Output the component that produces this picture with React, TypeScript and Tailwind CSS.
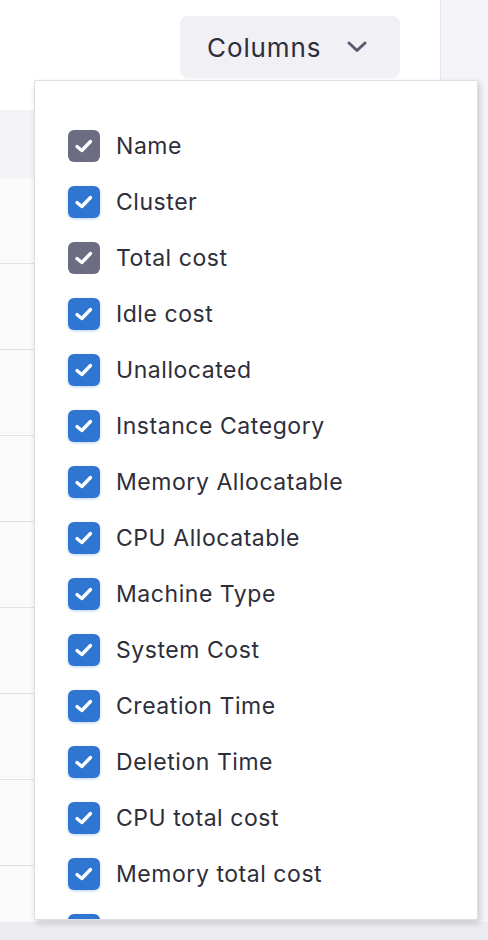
import React from 'react';

const columns: { label: string; locked?: boolean }[] = [
  { label: 'Name', locked: true },
  { label: 'Cluster' },
  { label: 'Total cost', locked: true },
  { label: 'Idle cost' },
  { label: 'Unallocated' },
  { label: 'Instance Category' },
  { label: 'Memory Allocatable' },
  { label: 'CPU Allocatable' },
  { label: 'Machine Type' },
  { label: 'System Cost' },
  { label: 'Creation Time' },
  { label: 'Deletion Time' },
  { label: 'CPU total cost' },
  { label: 'Memory total cost' },
  { label: '' },
];

const Check: React.FC<{ locked?: boolean }> = ({ locked }) => (
  <span
    className={`flex h-8 w-8 shrink-0 items-center justify-center rounded-[6px] ${
      locked ? 'bg-[#6c6c82]' : 'bg-[#2f76d3] shadow-[0_1px_3px_rgba(47,118,211,0.35)]'
    }`}
  >
    <svg width="20" height="16" viewBox="0 0 20 16" fill="none">
      <path d="M3 8.5 L7.8 12.5 L16.5 3.5" stroke="white" strokeWidth="3.4" strokeLinecap="round" strokeLinejoin="round" />
    </svg>
  </span>
);

const App: React.FC = () => {
  return (
    <div className="relative flex h-[940px] w-[488px] overflow-hidden bg-white font-['Inter',sans-serif] text-[#2e2e3b]">
      {/* Table area */}
      <div className="flex w-[440px] shrink-0 flex-col">
        <div className="flex h-[110px] shrink-0 items-start justify-end pr-[40px] pt-[16px]">
          <button className="flex h-[62px] w-[220px] items-center rounded-[8px] bg-[#f0f0f5] pl-[27px] text-[26px] tracking-[0.9px] text-[#2e2e3b]">
            Columns
            <svg className="ml-[25px]" width="22" height="12" viewBox="0 0 22 12" fill="none">
              <path d="M3 2 L11 9.5 L19 2" stroke="#5b5b70" strokeWidth="3" strokeLinecap="round" strokeLinejoin="round" />
            </svg>
          </button>
        </div>
        <div className="h-[68px] shrink-0 bg-[#f3f3f6]" />
        {Array.from({ length: 9 }).map((_, i) => (
          <div key={i} className="h-[86px] shrink-0 border-b border-[#e1e1e7] bg-[#fafafb]" />
        ))}
      </div>
      {/* Side panel */}
      <div className="flex-1 border-l border-[#e8e8ee] bg-[#f5f5f9]" />

      {/* Scrollbar track */}
      <div className="absolute bottom-0 left-0 h-[18px] w-full bg-[#ececf0]" />

      {/* Columns dropdown */}
      <div className="absolute left-[34px] top-[80px] h-[840px] w-[444px] overflow-hidden rounded-[2px] border border-[#dedee6] bg-white shadow-[2px_3px_6px_rgba(0,0,0,0.18)]">
        <ul className="pl-[33px] pt-[37px]">
          {columns.map((c, i) => (
            <li key={i} className="flex h-14 items-center">
              <Check locked={c.locked} />
              {c.label && (
                <span className="ml-[16px] text-[23px] leading-none tracking-[0.55px]">{c.label}</span>
              )}
            </li>
          ))}
        </ul>
      </div>
    </div>
  );
};

export default App;
